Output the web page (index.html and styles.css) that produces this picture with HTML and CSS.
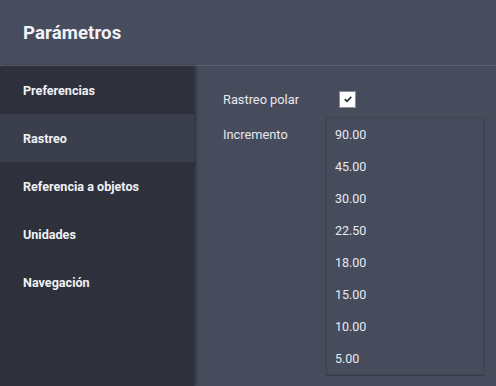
FILE: index.html
```html
<!DOCTYPE html>
<html lang="es">
<head>
<meta charset="utf-8">
<title>Parámetros</title>
<link rel="stylesheet" href="styles.css">
</head>
<body>
<div class="app">
  <header class="header"><h1 class="title">Parámetros</h1></header>
  <div class="main">
    <nav class="sidebar">
      <div class="nav-item">Preferencias</div>
      <div class="nav-item active">Rastreo</div>
      <div class="nav-item">Referencia a objetos</div>
      <div class="nav-item">Unidades</div>
      <div class="nav-item">Navegación</div>
    </nav>
    <section class="content">
      <div class="row row-check">
        <span class="label">Rastreo polar</span>
        <span class="checkbox">
          <svg width="10" height="10" viewBox="0 0 10 10"><path d="M1.8 5.2 L4 7.3 L8.3 2.8" fill="none" stroke="#2b2e38" stroke-width="1.7"/></svg>
        </span>
      </div>
      <div class="row row-list">
        <span class="label label-inc">Incremento</span>
        <ul class="list">
          <li>90.00</li>
          <li>45.00</li>
          <li>30.00</li>
          <li>22.50</li>
          <li>18.00</li>
          <li>15.00</li>
          <li>10.00</li>
          <li>5.00</li>
        </ul>
      </div>
    </section>
  </div>
</div>
</body>
</html>
```
FILE: styles.css
```css
html, body {
  margin: 0;
  padding: 0;
  width: 496px;
  height: 386px;
  overflow: hidden;
  background: #474c5d;
  font-family: Roboto, "Liberation Sans", sans-serif;
  color: #eef0f4;
}
.app {
  display: flex;
  flex-direction: column;
  height: 386px;
}
.header {
  height: 65px;
  border-bottom: 1px solid #5c6173;
  background: #474c5e;
  display: flex;
  align-items: center;
  padding-left: 23px;
  box-sizing: content-box;
}
.title {
  margin: 0;
  font-size: 18.6px;
  font-weight: 700;
  color: #f2f3f6;
  letter-spacing: 0.1px;
}
.main {
  flex: 1;
  display: flex;
}
.sidebar {
  width: 194px;
  background: #2e313c;
  box-shadow: 2px 0 3px rgba(30, 32, 40, 0.6);
  display: flex;
  flex-direction: column;
  position: relative;
  z-index: 1;
}
.nav-item {
  height: 48px;
  display: flex;
  align-items: center;
  padding-left: 23px;
  font-size: 12.6px;
  font-weight: 700;
  color: #f0f1f4;
}
.nav-item.active {
  background: #3b3f4d;
}
.content {
  flex: 1;
  padding: 24px 0 0 29px;
  display: flex;
  flex-direction: column;
}
.row {
  display: flex;
}
.label {
  width: 103px;
  font-size: 12.8px;
  color: #e6e8ee;
}
.row-check {
  align-items: center;
  height: 18px;
}
.checkbox {
  margin-left: 13px;
  width: 15px;
  height: 15px;
  background: #ffffff;
  border: 1px solid #8a8e9c;
  display: flex;
  align-items: center;
  justify-content: center;
}
.row-list {
  margin-top: 9px;
}
.label-inc {
  padding-top: 10px;
}
.list {
  list-style: none;
  margin: 0;
  padding: 0;
  width: 156px;
  height: 256px;
  border: 1px solid #3f4352;
  background: #474c5d;
  box-shadow: 0 1px 1px rgba(40, 42, 52, 0.5);
}
.list li {
  height: 32px;
  display: flex;
  align-items: center;
  padding-left: 8px;
  font-size: 12.5px;
  color: #e8eaf0;
}
```
